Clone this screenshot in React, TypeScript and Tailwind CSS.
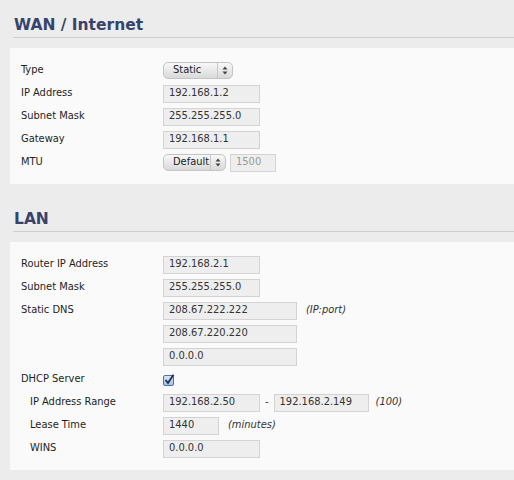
import React from "react";

const font = "font-['Tahoma','DejaVu_Sans_Condensed','DejaVu_Sans',sans-serif]";

const Row = ({ label, indent, children }: { label?: string; indent?: boolean; children?: React.ReactNode }) => (
  <div className="flex items-center h-[23px]">
    <div className={`${indent ? "pl-[20px]" : "pl-[11px]"} w-[153px] shrink-0 text-[11px] text-[#1e1e1e]`}>{label}</div>
    <div className="flex items-center gap-[6px]">{children}</div>
  </div>
);

const Input = ({ value, w = "w-[97px]", disabled }: { value: string; w?: string; disabled?: boolean }) => (
  <div
    className={`${w} h-[18px] bg-[#eeeeee] border border-[#d3d3d3] pl-[5px] flex items-center text-[11px] ${
      disabled ? "text-[#999]" : "text-[#333]"
    }`}
  >
    {value}
  </div>
);

const Select = ({ value, w }: { value: string; w: string }) => (
  <div
    className={`${w} h-[17px] rounded-[5px] border border-[#c4c4c4] bg-[linear-gradient(#f8f8f8,#d9d9d9)] flex items-center text-[11px] text-[#222]`}
  >
    <span className="flex-1 pl-[9px]">{value}</span>
    <span className="w-[15px] h-full border-l border-[#c8c8c8] flex items-center justify-center">
      <svg width="6" height="9" viewBox="0 0 6 9">
        <path d="M3 0.5 L5.5 3.5 H0.5 Z" fill="#444" />
        <path d="M3 8.5 L5.5 5.5 H0.5 Z" fill="#444" />
      </svg>
    </span>
  </div>
);

const Note = ({ children, className = "ml-[3px]" }: { children: React.ReactNode; className?: string }) => (
  <span className={`italic text-[11px] text-[#333] ${className}`}>{children}</span>
);

const Heading = ({ title, top }: { title: string; top: string }) => (
  <div className={`${top} ml-[13px] mb-[10px] border-b border-[#cfcfcf] pb-[2px]`}>
    <h2 className="pl-[1px] text-[15.5px] leading-[20px] font-bold text-[#36436c] font-['Verdana','DejaVu_Sans',sans-serif]">
      {title}
    </h2>
  </div>
);

const Check = () => (
  <svg width="12" height="12" viewBox="0 0 12 12">
    <defs>
      <linearGradient id="cb" x1="0" y1="0" x2="0" y2="1">
        <stop offset="0" stopColor="#dbe8f8" />
        <stop offset="1" stopColor="#9fc0ea" />
      </linearGradient>
    </defs>
    <rect x="0.5" y="1.5" width="10" height="10" rx="1.5" fill="url(#cb)" stroke="#4d72a8" />
    <path d="M2.5 6 L5 9 L10.5 0.8" fill="none" stroke="#1d2d55" strokeWidth="1.8" />
  </svg>
);

export default function App() {
  return (
    <div className={`w-[514px] h-[480px] bg-[#ececec] overflow-hidden ${font}`}>
      <Heading title="WAN / Internet" top="pt-[15px]" />
      <div className="ml-[10px] bg-[#fafafa] pt-[11px] pb-[10px]">
        <Row label="Type">
          <Select value="Static" w="w-[70px]" />
        </Row>
        <Row label="IP Address">
          <Input value="192.168.1.2" />
        </Row>
        <Row label="Subnet Mask">
          <Input value="255.255.255.0" />
        </Row>
        <Row label="Gateway">
          <Input value="192.168.1.1" />
        </Row>
        <Row label="MTU">
          <div className="flex items-center gap-[4px]">
            <Select value="Default" w="w-[63px]" />
            <Input value="1500" w="w-[46px]" disabled />
          </div>
        </Row>
      </div>

      <Heading title="LAN" top="mt-[25px]" />
      <div className="ml-[10px] bg-[#fafafa] pt-[11px] pb-[10px]">
        <Row label="Router IP Address">
          <Input value="192.168.2.1" />
        </Row>
        <Row label="Subnet Mask">
          <Input value="255.255.255.0" />
        </Row>
        <Row label="Static DNS">
          <Input value="208.67.222.222" w="w-[134px]" />
          <Note>(IP:port)</Note>
        </Row>
        <Row>
          <Input value="208.67.220.220" w="w-[134px]" />
        </Row>
        <Row>
          <Input value="0.0.0.0" w="w-[134px]" />
        </Row>
        <Row label="DHCP Server">
          <Check />
        </Row>
        <Row label="IP Address Range" indent>
          <Input value="192.168.2.50" />
          <span className="text-[11px] text-[#333] -mx-[1px]">-</span>
          <Input value="192.168.2.149" w="w-[95px]" />
          <Note className="ml-[1px]">(100)</Note>
        </Row>
        <Row label="Lease Time" indent>
          <Input value="1440" w="w-[56px]" />
          <Note>(minutes)</Note>
        </Row>
        <Row label="WINS" indent>
          <Input value="0.0.0.0" />
        </Row>
      </div>
    </div>
  );
}
